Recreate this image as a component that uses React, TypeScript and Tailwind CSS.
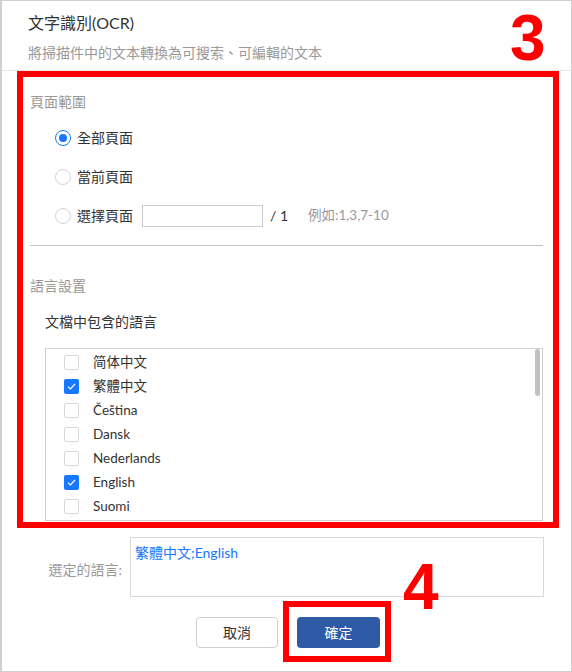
import * as React from 'react';

const languages = [
  { name: '简体中文', checked: false },
  { name: '繁體中文', checked: true },
  { name: 'Čeština', checked: false },
  { name: 'Dansk', checked: false },
  { name: 'Nederlands', checked: false },
  { name: 'English', checked: true },
  { name: 'Suomi', checked: false },
];

const pageOptions = ['全部頁面', '當前頁面', '選擇頁面'];

const Radio = ({ checked }: { checked: boolean }) => (
  <span
    className={`flex h-[16px] w-[16px] shrink-0 items-center justify-center rounded-full border bg-white ${
      checked ? 'border-[#1677ff]' : 'border-[#d4d4d4]'
    }`}
  >
    {checked && <span className="h-[8px] w-[8px] rounded-full bg-[#1677ff]" />}
  </span>
);

const Checkbox = ({ checked }: { checked: boolean }) =>
  checked ? (
    <span className="flex h-[15px] w-[15px] shrink-0 items-center justify-center rounded-[2px] bg-[#1677ff]">
      <svg width="9" height="7" viewBox="0 0 9 7" fill="none">
        <polyline points="1,3.6 3.4,6 8,1" stroke="white" strokeWidth="1.2" />
      </svg>
    </span>
  ) : (
    <span className="h-[15px] w-[15px] shrink-0 rounded-[2px] border border-[#d9d9d9] bg-white" />
  );

export default function App() {
  return (
    <div
      className="relative box-border flex h-[672px] w-[572px] flex-col border border-l-2 border-[#cfcfcf] bg-white text-[#333]"
      style={{ fontFamily: '"Lato", "Noto Sans CJK TC", sans-serif' }}
    >
      {/* header */}
      <div className="h-[70px] shrink-0 border-b border-[#e6e6e6] pl-[26px] pt-[11px]">
        <p className="text-[16px] leading-[22px] text-[#333]">文字識別(OCR)</p>
        <p className="mt-[9px] text-[14px] leading-[20px] text-[#999]">
          將掃描件中的文本轉換為可搜索、可編輯的文本
        </p>
      </div>

      {/* annotated section */}
      <div className="ml-[15px] h-[457px] w-[542px] shrink-0 border-[6px] border-[#ff0000] pl-[7px] pr-[10px] pt-[15px]">
        <p className="text-[14px] leading-[20px] text-[#999]">頁面範圍</p>
        <div className="mt-[6px] flex flex-col pl-[25px]">
          {pageOptions.map((label, i) => (
            <div key={label} className="flex h-[39px] items-center">
              <Radio checked={i === 0} />
              <span className="ml-[6px] text-[14px] leading-[20px] text-[#333]">{label}</span>
              {i === 2 && (
                <>
                  <span className="ml-[9px] h-[22px] w-[121px] border border-[#cccccc] bg-white" />
                  <span className="ml-[7px] text-[14px] text-[#333]">/ 1</span>
                  <span className="ml-[20px] text-[13.5px] text-[#999]">例如:1,3,7-10</span>
                </>
              )}
            </div>
          ))}
        </div>
        <div className="mt-[10px] h-px bg-[#c4c4c4]" />

        <p className="mt-[30px] text-[14px] leading-[20px] text-[#999]">語言設置</p>
        <p className="mt-[16px] pl-[15px] text-[14px] leading-[20px] text-[#333]">文檔中包含的語言</p>
        <div className="ml-[15px] mt-[16px] flex h-[173px] overflow-hidden border border-[#d0d0d0] bg-white">
          <div className="flex-1 pt-[1px]">
            {languages.map((lang) => (
              <div key={lang.name} className="flex h-[24px] items-center pl-[18px]">
                <Checkbox checked={lang.checked} />
                <span className="ml-[14px] text-[13.5px] leading-[20px] text-[#333]">{lang.name}</span>
              </div>
            ))}
          </div>
          <div className="w-[7px] pr-[1px]">
            <div className="h-[47px] w-[5px] rounded-full bg-[#c1c1c1]" />
          </div>
        </div>
      </div>

      {/* selected languages */}
      <div className="mt-[9px] flex items-start">
        <span className="mt-[23px] w-[120px] shrink-0 whitespace-nowrap text-right text-[14px] leading-[20px] text-[#999]">
          選定的語言:
        </span>
        <div className="ml-[8px] h-[60px] w-[414px] shrink-0 border border-[#d9d9d9] pl-[4px] pt-[5px] text-[14px] leading-[20px] text-[#1677ff]">
          繁體中文;English
        </div>
      </div>

      {/* buttons */}
      <div className="ml-[194px] mt-[20px] flex gap-[19px]">
        <button className="h-[31px] w-[82px] rounded-[4px] border border-[#d0d0d0] bg-white text-[14px] text-[#333]">
          取消
        </button>
        <div className="relative">
          <button className="h-[31px] w-[83px] rounded-[4px] bg-[#2f5ba6] text-[14px] text-white">確定</button>
          <span className="absolute -bottom-[14px] -left-[14px] -right-[11px] -top-[16px] border-[6px] border-[#ff0000]" />
        </div>
      </div>

      {/* step numbers */}
      <span
        className="absolute left-[508px] top-[5px] text-[64px] font-bold leading-none text-[#ff0000]"
        style={{ fontFamily: '"Liberation Sans", sans-serif' }}
      >
        3
      </span>
      <span
        className="absolute left-[401px] top-[554px] text-[64px] font-bold leading-none text-[#ff0000]"
        style={{ fontFamily: '"Liberation Sans", sans-serif' }}
      >
        4
      </span>
    </div>
  );
}
